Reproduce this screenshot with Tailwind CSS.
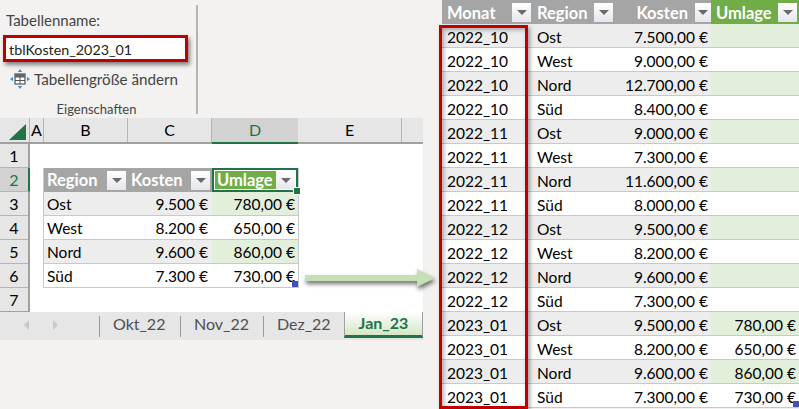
<!DOCTYPE html>
<html lang="de">
  <head>
    <meta charset="UTF-8" />
    <title>Tabellen</title>
    <script src="https://cdn.jsdelivr.net/npm/@tailwindcss/browser@4"></script>
  </head>
  <body class="bg-[#f3f2f1]">
    <div class="relative flex w-[799px] h-[409px] overflow-hidden font-['Lato',sans-serif] text-[15.5px] text-black">

      <!-- left: ribbon + sheet -->
      <div class="w-[440px] flex flex-col">
        <div class="relative h-[118px] w-[198px]">
          <div class="h-[109px] mt-[5px] w-[198px] border-r-2 border-[#b4b4b4] pl-[6px] pt-[5px] text-[#444]">
            <p class="text-[15px] leading-5">Tabellenname:</p>
          </div>
          <div class="absolute left-[3px] top-[35px] w-[185px] h-[27px] border-[3px] border-[#c00000] bg-white pl-[3px] leading-[24px] text-[14.3px] text-[#222] shadow-[2px_3px_4px_rgba(0,0,0,0.45)]">tblKosten_2023_01</div>
          <div class="absolute left-[10px] top-[69px] flex items-center gap-[4px] text-[15.2px] text-[#444]">
            <svg width="20" height="20" viewBox="0 0 20 20">
              <rect x="5" y="5" width="10" height="10" fill="#fff" stroke="#555" stroke-width="1.2" />
              <path d="M5 8h10M5 11.5h10M10 5v10" stroke="#555" stroke-width="1" />
              <rect x="5" y="5" width="10" height="3" fill="#666" />
              <path d="M10 0l2.2 3h-4.4zM10 20l2.2-3h-4.4zM0 10l3-2.2v4.4zM20 10l-3-2.2v4.4z" fill="#3c8fd8" />
            </svg>
            <span class="leading-5">Tabellengröße ändern</span>
          </div>
          <p class="absolute left-0 top-[101px] w-[193px] text-center text-[13px] leading-4 text-[#444]">Eigenschaften</p>
        </div>

        <div class="w-[423px] bg-white">
          <!-- column headers -->
          <div class="flex h-[26px] bg-[#e6e6e6] border-b-2 border-[#a0a0a0] text-[16px] leading-[24px] text-center">
            <div class="relative w-[30px] border-r border-[#b5b5b5]">
              <svg class="absolute left-[9px] top-[6px]" width="18" height="17" viewBox="0 0 18 17"><path d="M17 0v16H0z" fill="#217346" /></svg>
            </div>
            <div class="w-[14px] border-r border-[#b5b5b5]">A</div>
            <div class="w-[84px] border-r border-[#b5b5b5]">B</div>
            <div class="w-[84px] border-r border-[#b5b5b5]">C</div>
            <div class="w-[86px] -mb-[2px] border-b-2 border-[#217346] bg-[#d2d2d2] text-[#217346]">D</div>
            <div class="w-[104px] border-r border-[#b5b5b5]">E</div>
            <div class="flex-1"></div>
          </div>

          <div class="flex">
            <!-- row headers -->
            <div class="w-[30px] bg-[#e6e6e6] border-r-2 border-[#a0a0a0] text-[16px] text-center leading-[23px]">
              <div class="h-[24px] border-b border-[#b5b5b5]">1</div>
              <div class="h-[24px] -mr-[2px] border-b border-r-2 border-b-[#b5b5b5] border-r-[#217346] bg-[#d2d2d2] text-[#217346]">2</div>
              <div class="h-[24px] border-b border-[#b5b5b5]">3</div>
              <div class="h-[24px] border-b border-[#b5b5b5]">4</div>
              <div class="h-[24px] border-b border-[#b5b5b5]">5</div>
              <div class="h-[24px] border-b border-[#b5b5b5]">6</div>
              <div class="h-[24px] border-b border-[#a0a0a0]">7</div>
            </div>

            <!-- small table -->
            <div class="flex-1 pt-[24px] pl-[13px] pb-[24px]">
              <div class="w-[256px] border-l border-r border-[#c9c9c9] leading-[25px]">
                <div class="flex h-[24px] bg-[#a5a5a5] font-bold text-[16.5px] text-white">
                  <div class="w-[84px] flex items-center justify-between pl-[3px] pr-[2px]">
                    <span>Region</span>
                    <span class="flex items-center justify-center w-[19px] h-[19px] bg-gradient-to-b from-white to-[#e4e6ec]"><span class="w-0 h-0 border-x-[5px] border-x-transparent border-t-[5px] border-t-[#6a6a6a]"></span></span>
                  </div>
                  <div class="w-[84px] flex items-center justify-between pl-[3px] pr-[2px]">
                    <span>Kosten</span>
                    <span class="flex items-center justify-center w-[19px] h-[19px] bg-gradient-to-b from-white to-[#e4e6ec]"><span class="w-0 h-0 border-x-[5px] border-x-transparent border-t-[5px] border-t-[#6a6a6a]"></span></span>
                  </div>
                  <div class="relative w-[86px] flex items-center justify-between pl-[3px] pr-[1px] bg-[#70ad47] border-2 border-[#217346] outline outline-1 -outline-offset-3 outline-white">
                    <span>Umlage</span>
                    <span class="flex items-center justify-center w-[19px] h-[19px] bg-gradient-to-b from-white to-[#e4e6ec]"><span class="w-0 h-0 border-x-[5px] border-x-transparent border-t-[5px] border-t-[#6a6a6a]"></span></span>
                    <span class="absolute -right-[4px] -bottom-[4px] w-[6px] h-[6px] bg-[#217346] outline outline-1 outline-white"></span>
                  </div>
                </div>
                <div class="flex h-[24px] border-b border-[#c9c9c9] bg-[#ededed]"><div class="w-[84px] pl-[3px]">Ost</div><div class="w-[84px] pr-[4px] text-right">9.500 €</div><div class="w-[86px] pr-[3px] text-right bg-[#e2efda]">780,00 €</div></div>
                <div class="flex h-[24px] border-b border-[#c9c9c9] bg-white"><div class="w-[84px] pl-[3px]">West</div><div class="w-[84px] pr-[4px] text-right">8.200 €</div><div class="w-[86px] pr-[3px] text-right">650,00 €</div></div>
                <div class="flex h-[24px] border-b border-[#c9c9c9] bg-[#ededed]"><div class="w-[84px] pl-[3px]">Nord</div><div class="w-[84px] pr-[4px] text-right">9.600 €</div><div class="w-[86px] pr-[3px] text-right bg-[#e2efda]">860,00 €</div></div>
                <div class="relative flex h-[24px] border-b border-[#c9c9c9] bg-white"><div class="w-[84px] pl-[3px]">Süd</div><div class="w-[84px] pr-[4px] text-right">7.300 €</div><div class="w-[86px] pr-[3px] text-right">730,00 €</div><span class="absolute right-0 bottom-0 w-[6px] h-[6px] bg-[#3f51b5]"></span></div>
              </div>
            </div>
          </div>

          <!-- sheet tabs -->
          <div class="flex h-[28px] bg-[#e6e6e6] text-[16px] text-[#505050]">
            <div class="w-[99px] flex items-center gap-[24px] pl-[24px] pb-[2px]">
              <span class="w-0 h-0 border-y-[5px] border-y-transparent border-r-[5px] border-r-[#c8c8c8]"></span>
              <span class="w-0 h-0 border-y-[5px] border-y-transparent border-l-[5px] border-l-[#c8c8c8]"></span>
            </div>
            <div class="w-[81px] h-[21px] mt-[4px] border-l border-[#9a9a9a] pl-[13px] leading-[15px]">Okt_22</div>
            <div class="w-[83px] h-[21px] mt-[4px] border-l border-[#9a9a9a] pl-[13px] leading-[15px]">Nov_22</div>
            <div class="w-[81px] h-[21px] mt-[4px] border-l border-[#9a9a9a] pl-[13px] leading-[15px]">Dez_22</div>
            <div class="w-[79px] h-[26px] border-x border-[#a0a0a0] border-b-[3px] border-b-[#217346] bg-gradient-to-b from-white to-[#d3e6c6] text-center font-bold leading-[22px] text-[#217346]">Jan_23</div>
          </div>
        </div>
      </div>

      <!-- right: long table -->
      <div class="w-[359px] pl-[2px] leading-[26px]">
        <div class="flex h-[24px] bg-[#a5a5a5] font-bold text-[16.5px] leading-[24px] text-white">
          <div class="w-[90px] flex items-center justify-between pl-[5px] pr-[1px]">
            <span class="pt-[2px]">Monat</span>
            <span class="flex items-center justify-center w-[19px] h-[19px] bg-gradient-to-b from-white to-[#e4e6ec]"><span class="w-0 h-0 border-x-[5px] border-x-transparent border-t-[5px] border-t-[#6a6a6a]"></span></span>
          </div>
          <div class="w-[86px] flex items-center justify-between pl-[5px] pr-[5px]">
            <span class="pt-[2px]">Region</span>
            <span class="flex items-center justify-center w-[19px] h-[19px] bg-gradient-to-b from-white to-[#e4e6ec]"><span class="w-0 h-0 border-x-[5px] border-x-transparent border-t-[5px] border-t-[#6a6a6a]"></span></span>
          </div>
          <div class="w-[93px] flex items-center justify-end gap-[7px]">
            <span class="pt-[2px]">Kosten</span>
            <span class="flex items-center justify-center w-[16px] h-[19px] bg-gradient-to-b from-white to-[#e4e6ec]"><span class="w-0 h-0 border-x-[5px] border-x-transparent border-t-[5px] border-t-[#6a6a6a]"></span></span>
          </div>
          <div class="flex-1 flex items-center justify-between pl-[5px] pr-[2px] bg-[#70ad47]">
            <span class="pt-[2px]">Umlage</span>
            <span class="flex items-center justify-center w-[19px] h-[19px] bg-gradient-to-b from-white to-[#e4e6ec]"><span class="w-0 h-0 border-x-[5px] border-x-transparent border-t-[5px] border-t-[#6a6a6a]"></span></span>
          </div>
        </div>
        <div class="flex h-[24px] border-b border-[#c9c9c9] bg-[#ededed]"><div class="w-[90px] pl-[5px]">2022_10</div><div class="w-[86px] pl-[5px]">Ost</div><div class="w-[93px] pr-[3px] text-right">7.500,00 €</div><div class="flex-1 pr-[3px] text-right bg-[#e2efda]"></div></div>
        <div class="flex h-[24px] border-b border-[#c9c9c9] bg-white"><div class="w-[90px] pl-[5px]">2022_10</div><div class="w-[86px] pl-[5px]">West</div><div class="w-[93px] pr-[3px] text-right">9.000,00 €</div><div class="flex-1 pr-[3px] text-right"></div></div>
        <div class="flex h-[24px] border-b border-[#c9c9c9] bg-[#ededed]"><div class="w-[90px] pl-[5px]">2022_10</div><div class="w-[86px] pl-[5px]">Nord</div><div class="w-[93px] pr-[3px] text-right">12.700,00 €</div><div class="flex-1 pr-[3px] text-right bg-[#e2efda]"></div></div>
        <div class="flex h-[24px] border-b border-[#c9c9c9] bg-white"><div class="w-[90px] pl-[5px]">2022_10</div><div class="w-[86px] pl-[5px]">Süd</div><div class="w-[93px] pr-[3px] text-right">8.400,00 €</div><div class="flex-1 pr-[3px] text-right"></div></div>
        <div class="flex h-[24px] border-b border-[#c9c9c9] bg-[#ededed]"><div class="w-[90px] pl-[5px]">2022_11</div><div class="w-[86px] pl-[5px]">Ost</div><div class="w-[93px] pr-[3px] text-right">9.000,00 €</div><div class="flex-1 pr-[3px] text-right bg-[#e2efda]"></div></div>
        <div class="flex h-[24px] border-b border-[#c9c9c9] bg-white"><div class="w-[90px] pl-[5px]">2022_11</div><div class="w-[86px] pl-[5px]">West</div><div class="w-[93px] pr-[3px] text-right">7.300,00 €</div><div class="flex-1 pr-[3px] text-right"></div></div>
        <div class="flex h-[24px] border-b border-[#c9c9c9] bg-[#ededed]"><div class="w-[90px] pl-[5px]">2022_11</div><div class="w-[86px] pl-[5px]">Nord</div><div class="w-[93px] pr-[3px] text-right">11.600,00 €</div><div class="flex-1 pr-[3px] text-right bg-[#e2efda]"></div></div>
        <div class="flex h-[24px] border-b border-[#c9c9c9] bg-white"><div class="w-[90px] pl-[5px]">2022_11</div><div class="w-[86px] pl-[5px]">Süd</div><div class="w-[93px] pr-[3px] text-right">8.000,00 €</div><div class="flex-1 pr-[3px] text-right"></div></div>
        <div class="flex h-[24px] border-b border-[#c9c9c9] bg-[#ededed]"><div class="w-[90px] pl-[5px]">2022_12</div><div class="w-[86px] pl-[5px]">Ost</div><div class="w-[93px] pr-[3px] text-right">9.500,00 €</div><div class="flex-1 pr-[3px] text-right bg-[#e2efda]"></div></div>
        <div class="flex h-[24px] border-b border-[#c9c9c9] bg-white"><div class="w-[90px] pl-[5px]">2022_12</div><div class="w-[86px] pl-[5px]">West</div><div class="w-[93px] pr-[3px] text-right">8.200,00 €</div><div class="flex-1 pr-[3px] text-right"></div></div>
        <div class="flex h-[24px] border-b border-[#c9c9c9] bg-[#ededed]"><div class="w-[90px] pl-[5px]">2022_12</div><div class="w-[86px] pl-[5px]">Nord</div><div class="w-[93px] pr-[3px] text-right">9.600,00 €</div><div class="flex-1 pr-[3px] text-right bg-[#e2efda]"></div></div>
        <div class="flex h-[24px] border-b border-[#c9c9c9] bg-white"><div class="w-[90px] pl-[5px]">2022_12</div><div class="w-[86px] pl-[5px]">Süd</div><div class="w-[93px] pr-[3px] text-right">7.300,00 €</div><div class="flex-1 pr-[3px] text-right"></div></div>
        <div class="flex h-[24px] border-b border-[#c9c9c9] bg-[#ededed]"><div class="w-[90px] pl-[5px]">2023_01</div><div class="w-[86px] pl-[5px]">Ost</div><div class="w-[93px] pr-[3px] text-right">9.500,00 €</div><div class="flex-1 pr-[3px] text-right bg-[#e2efda]">780,00 €</div></div>
        <div class="flex h-[24px] border-b border-[#c9c9c9] bg-white"><div class="w-[90px] pl-[5px]">2023_01</div><div class="w-[86px] pl-[5px]">West</div><div class="w-[93px] pr-[3px] text-right">8.200,00 €</div><div class="flex-1 pr-[3px] text-right">650,00 €</div></div>
        <div class="flex h-[24px] border-b border-[#c9c9c9] bg-[#ededed]"><div class="w-[90px] pl-[5px]">2023_01</div><div class="w-[86px] pl-[5px]">Nord</div><div class="w-[93px] pr-[3px] text-right">9.600,00 €</div><div class="flex-1 pr-[3px] text-right bg-[#e2efda]">860,00 €</div></div>
        <div class="relative flex h-[24px] border-b border-[#c9c9c9] bg-white"><div class="w-[90px] pl-[5px]">2023_01</div><div class="w-[86px] pl-[5px]">Süd</div><div class="w-[93px] pr-[3px] text-right">7.300,00 €</div><div class="flex-1 pr-[3px] text-right">730,00 €</div><span class="absolute right-0 bottom-0 w-[6px] h-[6px] bg-[#3f51b5]"></span></div>
      </div>

      <!-- red frame over the Monat column -->
      <div class="absolute left-[439px] top-[25px] w-[89px] h-[384px] border-[3px] border-[#c00000] shadow-[2px_2px_4px_rgba(0,0,0,0.35),inset_2px_2px_4px_rgba(0,0,0,0.3)]"></div>

      <!-- arrow between the tables -->
      <svg class="absolute left-[304px] top-[266px] drop-shadow-[1px_3px_2px_rgba(0,0,0,0.55)]" width="132" height="24" viewBox="0 0 132 24">
        <path d="M1 9h112V3l18 9-18 9v-6H1z" fill="#c5e0b4" />
      </svg>
    </div>
  </body>
</html>
